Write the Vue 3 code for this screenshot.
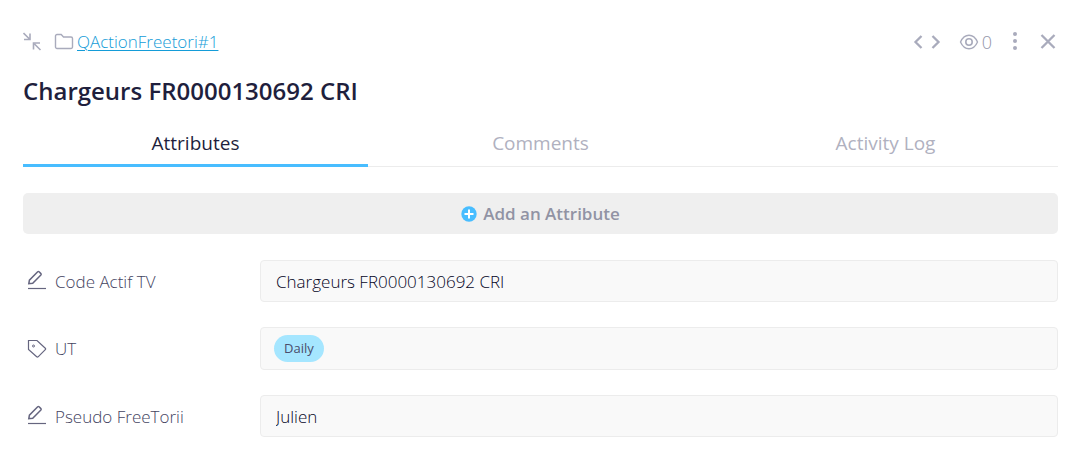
<script setup>
import { ref, reactive } from 'vue'

const tabs = ['Attributes', 'Comments', 'Activity Log']
const active = ref('Attributes')
const fields = reactive([
  { id: 'code', label: 'Code Actif TV', type: 'text', value: 'Chargeurs FR0000130692 CRI' },
  { id: 'ut', label: 'UT', type: 'tag', value: 'Daily' },
  { id: 'pseudo', label: 'Pseudo FreeTorii', type: 'text', value: 'Julien' },
])
</script>

<template>
  <main class="panel">
    <header class="bar">
      <button class="icon-btn" type="button" aria-label="Collapse">
        <svg width="20" height="20" viewBox="0 0 20 20" class="grey">
          <path d="M.5 1l6 6M7 1.500V7.500H1M17.500 18l-6-6M10.500 17.500v-6.500H17" stroke-width="1.600" />
        </svg>
      </button>
      <svg class="grey folder" width="20" height="18" viewBox="0 0 20 18" aria-hidden="true">
        <path d="M1.500 3a1.500 1.500 0 0 1 1.500-1.500h4.200l2.300 2.500H17a1.500 1.500 0 0 1 1.500 1.500V14a1.500 1.500 0 0 1-1.500 1.500H3a1.500 1.500 0 0 1-1.500-1.500z" stroke-width="1.400" />
      </svg>
      <a class="crumb" href="#">QActionFreetori#1</a>
      <div class="tools">
        <button class="icon-btn" type="button" aria-label="Previous">
          <svg width="10" height="16" viewBox="0 0 10 16" class="grey"><path d="M8.500 2L2.500 8l6 6" stroke-width="2.300" /></svg>
        </button>
        <button class="icon-btn next" type="button" aria-label="Next">
          <svg width="10" height="16" viewBox="0 0 10 16" class="grey"><path d="M1.500 2l6 6-6 6" stroke-width="2.300" /></svg>
        </button>
        <button class="icon-btn watch" type="button" aria-label="Watchers: 0">
          <svg width="20" height="16" viewBox="0 0 20 16" class="grey">
            <path d="M1.500 8C3.500 3.500 6.500 1.200 10 1.200S16.500 3.500 18.500 8C16.500 12.500 13.500 14.800 10 14.800S3.500 12.500 1.500 8z" stroke-width="1.400" />
            <circle cx="10" cy="8" r="3.200" stroke-width="1.600" />
          </svg>
          <span>0</span>
        </button>
        <button class="icon-btn more" type="button" aria-label="More">
          <svg width="6" height="20" viewBox="0 0 6 20" class="dots">
            <circle cx="3" cy="2" r="2" /><circle cx="3" cy="9" r="2" /><circle cx="3" cy="16" r="2" />
          </svg>
        </button>
        <button class="icon-btn close" type="button" aria-label="Close">
          <svg width="16" height="16" viewBox="0 0 16 16" class="grey"><path d="M1.500 1l13 13M14.500 1l-13 13" stroke-width="2.300" /></svg>
        </button>
      </div>
    </header>

    <h1>Chargeurs FR0000130692 CRI</h1>

    <nav class="tabs" role="tablist">
      <button
        v-for="t in tabs"
        :key="t"
        type="button"
        role="tab"
        class="tab"
        :class="{ on: t === active }"
        :aria-selected="t === active"
        @click="active = t"
      >{{ t }}</button>
    </nav>

    <button class="add" type="button">
      <svg width="16" height="16" viewBox="0 0 16 16" aria-hidden="true">
        <circle cx="8" cy="8" r="7.700" fill="#48bdff" />
        <path d="M8 3.500v9M3.500 8h9" stroke="#fff" stroke-width="2" />
      </svg>
      <span>Add an Attribute</span>
    </button>

    <div class="rows">
      <div v-for="f in fields" :key="f.id" class="row">
        <label class="name" :for="f.id">
          <svg v-if="f.type === 'text'" class="ink" width="20" height="22" viewBox="0 0 20 22" aria-hidden="true">
            <path d="M1.800 13.700l.6-3.600 8.300-8.300q.7-.6 1.400 0l1.800 1.800q.6.700 0 1.400l-8.200 8.200z" stroke-width="1.500" />
            <path d="M1 18.500h18" stroke-width="1.200" />
          </svg>
          <svg v-else class="ink" width="20" height="20" viewBox="0 0 20 20" aria-hidden="true">
            <path d="M1.500 1.500h8.500l8.300 7.700q.7.700 0 1.400l-7.200 7.200q-.7.600-1.400 0L1.500 10.500z" stroke-width="1.200" />
            <circle cx="6.500" cy="7" r="1" stroke-width="1" />
          </svg>
          <span>{{ f.label }}</span>
        </label>
        <input v-if="f.type === 'text'" :id="f.id" v-model="f.value" class="field" type="text" />
        <button v-else :id="f.id" class="field tagged" type="button"><span class="tag">{{ f.value }}</span></button>
      </div>
    </div>
  </main>
</template>

<style>
body {
  background: #fff;
}
</style>

<style scoped>
.panel {
  padding: 28px 15px 16px 23px;
  font-family: "Open Sans", "Noto Sans", sans-serif;
  color: #1f1f3d;
}
button {
  font: inherit;
  color: inherit;
  background: none;
  border: 0;
  padding: 0;
  cursor: pointer;
}
svg {
  display: block;
  flex: none;
}
.grey {
  fill: none;
  stroke: #a9abbc;
}
.dots {
  fill: #a9abbc;
}
.ink {
  fill: none;
  stroke: #65657f;
}
.bar {
  display: flex;
  align-items: center;
  height: 28px;
}
.icon-btn {
  display: flex;
  align-items: center;
}
.folder {
  margin-left: 11px;
}
.crumb {
  margin-left: 3px;
  font-size: 17px;
  line-height: 28px;
  font-weight: 300;
  color: #149cd8;
  text-underline-offset: 2px;
  text-decoration-thickness: 1px;
}
.tools {
  display: flex;
  align-items: center;
  margin-left: auto;
  padding-right: 2px;
}
.next {
  margin-left: 8px;
}
.watch {
  gap: 3px;
  margin-left: 18px;
  font-size: 18px;
  font-weight: 300;
  line-height: 28px;
  color: #9496aa;
}
.more {
  margin-left: 20px;
}
.close {
  margin-left: 22px;
}
h1 {
  margin: 18px 0 0;
  font-size: 24px;
  line-height: 34px;
  font-weight: 600;
}
.tabs {
  display: grid;
  grid-template-columns: repeat(3, 1fr);
  margin-top: 12px;
  box-shadow: inset 0 -1px #ececec;
}
.tab {
  height: 47px;
  padding-top: 2px;
  border-bottom: 3px solid transparent;
  font-size: 19px;
  line-height: 28px;
  color: #b0b1bf;
}
.tab.on {
  color: #1f1f3d;
  border-color: #48bdff;
}
.add {
  display: flex;
  align-items: center;
  justify-content: center;
  gap: 6px;
  width: 100%;
  height: 41px;
  margin-top: 26px;
  border-radius: 5px;
  background: #efefef;
  color: #9193a4;
  font-size: 17px;
  font-weight: 600;
}
.rows {
  display: grid;
  gap: 25px;
  margin-top: 26px;
}
.row {
  display: grid;
  grid-template-columns: 237px 1fr;
  align-items: center;
}
.name {
  display: flex;
  align-items: center;
  gap: 8px;
  padding-left: 4px;
  font-size: 17px;
  font-weight: 300;
  color: #44445f;
}
.field {
  box-sizing: border-box;
  width: 100%;
  min-width: 0;
  height: 42px;
  padding: 0 15px;
  border: 1px solid #ececec;
  border-radius: 4px;
  background: #f9f9f9;
  color: #05051f;
  font-family: inherit;
  font-size: 17px;
  font-weight: 300;
}
.tagged {
  display: flex;
  align-items: center;
  height: 43px;
  padding: 0 13px;
}
.tag {
  padding: 0 10px;
  border-radius: 14px;
  background: #a5e6ff;
  color: #4a4d6c;
  font-size: 13px;
  font-weight: 400;
  line-height: 27px;
}
</style>
